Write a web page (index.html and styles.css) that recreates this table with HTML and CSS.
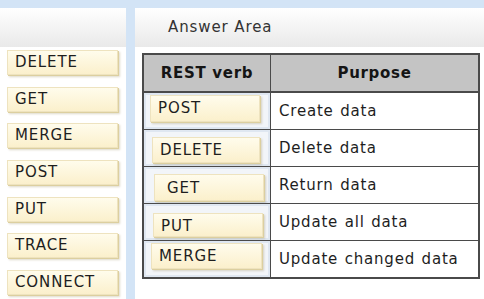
FILE: index.html
```html
<!DOCTYPE html>
<html>
<head>
<meta charset="utf-8">
<link rel="stylesheet" href="styles.css">
</head>
<body>
<div class="app">
  <div class="bank">
    <div class="bank-head"></div>
    <div class="bank-list">
      <div class="chip">DELETE</div>
      <div class="chip">GET</div>
      <div class="chip">MERGE</div>
      <div class="chip">POST</div>
      <div class="chip">PUT</div>
      <div class="chip">TRACE</div>
      <div class="chip">CONNECT</div>
    </div>
  </div>
  <div class="answer">
    <div class="answer-head">Answer Area</div>
    <table class="grid">
      <thead>
        <tr><th class="col-verb">REST verb</th><th class="col-purpose">Purpose</th></tr>
      </thead>
      <tbody>
        <tr><td class="slot"><div class="chip chip-a">POST</div></td><td class="purpose">Create data</td></tr>
        <tr><td class="slot"><div class="chip chip-b">DELETE</div></td><td class="purpose">Delete data</td></tr>
        <tr><td class="slot"><div class="chip chip-c">GET</div></td><td class="purpose">Return data</td></tr>
        <tr><td class="slot"><div class="chip chip-d">PUT</div></td><td class="purpose">Update all data</td></tr>
        <tr><td class="slot"><div class="chip chip-e">MERGE</div></td><td class="purpose">Update changed data</td></tr>
      </tbody>
    </table>
  </div>
</div>
</body>
</html>
```

FILE: styles.css
```css
html, body {
  margin: 0;
  padding: 0;
}
body {
  width: 484px;
  height: 299px;
  overflow: hidden;
  background: #d3e4f6;
  font-family: "DejaVu Sans", Verdana, sans-serif;
  color: #1e1e1e;
}
.app {
  display: flex;
  gap: 9px;
  padding-top: 8px;
  height: 291px;
}
.bank {
  width: 126px;
  background: #fff;
}
.bank-head {
  height: 39px;
  background: linear-gradient(#ffffff, #e9e9e9);
}
.bank-list {
  display: flex;
  flex-direction: column;
  gap: 11.67px;
  padding: 3px 0 0 7px;
}
.chip {
  box-sizing: border-box;
  width: 111px;
  height: 25px;
  padding-left: 7px;
  font-size: 15px;
  letter-spacing: 0.9px;
  line-height: 23px;
  color: #1e1e1e;
  background: linear-gradient(#fffcec, #fbf0cc);
  border: 1px solid #eee3bf;
  box-shadow: 1px 1px 0 #dccf9f, 2px 2px 2px rgba(120, 100, 40, 0.25);
}
.answer {
  flex: 1;
  background: #fff;
}
.answer-head {
  height: 39px;
  line-height: 39px;
  padding-left: 33px;
  font-size: 15px;
  letter-spacing: 0.9px;
  color: #333;
  background: linear-gradient(#ffffff, #e9e9e9);
}
.grid {
  margin: 6px 0 0 7px;
  width: 338px;
  border-collapse: collapse;
  border: 2px solid #4a4a4a;
}
.grid th {
  height: 36px;
  padding: 0;
  background: #c4c4c4;
  font-size: 15px;
  letter-spacing: 0.7px;
  font-weight: bold;
  color: #151515;
  border: 1px solid #4a4a4a;
  border-bottom-width: 2px;
}
.col-verb {
  width: 126px;
}
.grid td {
  height: 36px;
  padding: 0;
  border: 1px solid #4a4a4a;
}
.slot {
  vertical-align: top;
  background: #f2f5f9;
  box-shadow: inset 0 0 0 2px #dfe7f1;
}
.grid td.purpose {
  padding-left: 8px;
  font-size: 15px;
  letter-spacing: 0.8px;
  word-spacing: 1px;
  color: #1e1e1e;
}
.chip-a { margin: 2px 0 0 6px; width: 110px; height: 27px; line-height: 25px; }
.chip-b { margin: 7px 0 0 8px; width: 108px; height: 26px; line-height: 24px; }
.chip-c { margin: 7px 0 0 10px; width: 110px; height: 27px; line-height: 27px; padding-left: 12px; }
.chip-d { margin: 9px 0 0 9px; width: 110px; height: 24px; line-height: 24px; }
.chip-e { margin: 2px 0 0 7px; width: 111px; height: 26px; line-height: 24px; }
```
